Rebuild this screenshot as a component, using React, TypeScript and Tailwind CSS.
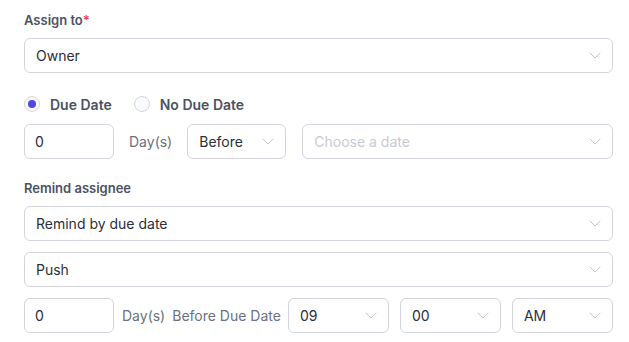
function Chevron() {
  return (
    <svg width="12" height="7" viewBox="0 0 12 7" fill="none" className="shrink-0 text-[#c3c6cd]">
      <path d="M1 1l5 5 5-5" stroke="currentColor" strokeWidth="1" strokeLinecap="round" strokeLinejoin="round" />
    </svg>
  );
}

function Select({
  value,
  placeholder,
  className = '',
}: {
  value?: string;
  placeholder?: string;
  className?: string;
}) {
  return (
    <div
      className={`flex h-[35px] items-center justify-between rounded-md border border-[#d4d5dc] bg-white pl-[11px] pr-[11px] text-[14px] ${className}`}
    >
      {value ? (
        <span className="text-[#2a2f3a]">{value}</span>
      ) : (
        <span className="text-[#c8cad1]">{placeholder}</span>
      )}
      <Chevron />
    </div>
  );
}

function Input({ value }: { value: string }) {
  return (
    <div className="flex h-[35px] w-[90px] shrink-0 items-center rounded-md border border-[#d4d5dc] bg-white pl-[10px] text-[14px] text-[#2a2f3a]">
      {value}
    </div>
  );
}

function Radio({ checked, label }: { checked?: boolean; label: string }) {
  return (
    <label className="flex items-center gap-[10px]">
      <span className="flex h-4 w-4 items-center justify-center rounded-full border border-[#d4d5dc] bg-[#f9fafb]">
        {checked && <span className="h-2 w-2 rounded-full bg-[#4f46e5]" />}
      </span>
      <span className="text-[14px] font-semibold text-[#4b5263]">{label}</span>
    </label>
  );
}

export default function App() {
  return (
    <div className="min-h-[342px] w-[629px] bg-white pl-6 pr-4 pt-[10px] font-['Inter',sans-serif]">
      {/* Assign to */}
      <div className="h-5 text-[13px] font-semibold leading-5 text-[#4b5263]">
        Assign to<span className="text-[#ef4444]">*</span>
      </div>
      <Select value="Owner" className="mt-2" />

      {/* Due date */}
      <div className="mt-[21px] flex h-5 items-center gap-[22px]">
        <Radio checked label="Due Date" />
        <Radio label="No Due Date" />
      </div>
      <div className="mt-[10px] flex items-center">
        <Input value="0" />
        <span className="ml-[15px] text-[14px] text-[#6b7180]">Day(s)</span>
        <Select value="Before" className="ml-[15px] w-[99px]" />
        <Select placeholder="Choose a date" className="ml-4 flex-1" />
      </div>

      {/* Remind assignee */}
      <div className="mt-[19px] h-5 text-[13px] font-semibold leading-5 text-[#4b5263]">
        Remind assignee
      </div>
      <Select value="Remind by due date" className="mt-2" />
      <Select value="Push" className="mt-[11px]" />
      <div className="mt-[11px] flex items-center">
        <Input value="0" />
        <span className="ml-2 text-[14px] text-[#6b7180]">Day(s)</span>
        <span className="ml-[7px] text-[14px] text-[#6b7180]">Before Due Date</span>
        <Select value="09" className="ml-[7px] w-[101px]" />
        <Select value="00" className="ml-[11px] w-[101px]" />
        <Select value="AM" className="ml-[11px] flex-1" />
      </div>
    </div>
  );
}
